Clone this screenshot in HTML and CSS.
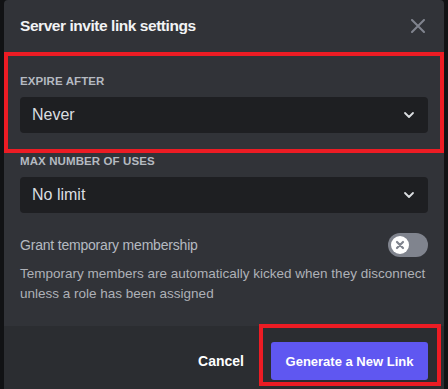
FILE: index.html
```html
<!DOCTYPE html>
<html lang="en">
<head>
    <meta charset="UTF-8">
    <meta name="viewport" content="width=device-width, initial-scale=1.0">
    <title>Server invite link settings</title>
    <link rel="stylesheet" href="styles.css">
</head>
<body>
    <div class="modal">
        <!-- header -->
        <div class="modal-header">
            <h1>Server invite link settings</h1>
            <button class="close-btn" aria-label="Close">
                <svg width="14" height="14" viewBox="0 0 14 14">
                    <path d="M1 1L13 13M13 1L1 13" stroke="currentColor" stroke-width="2" stroke-linecap="round"/>
                </svg>
            </button>
        </div>

        <!-- settings -->
        <div class="modal-body">
            <div class="field">
                <label>Expire After</label>
                <div class="select">
                    <span>Never</span>
                    <svg class="chevron" width="12" height="8" viewBox="0 0 12 8">
                        <path d="M2 2L6 6L10 2" fill="none" stroke="currentColor" stroke-width="1.8" stroke-linecap="round" stroke-linejoin="round"/>
                    </svg>
                </div>
            </div>

            <div class="field">
                <label>Max Number of Uses</label>
                <div class="select">
                    <span>No limit</span>
                    <svg class="chevron" width="12" height="8" viewBox="0 0 12 8">
                        <path d="M2 2L6 6L10 2" fill="none" stroke="currentColor" stroke-width="1.8" stroke-linecap="round" stroke-linejoin="round"/>
                    </svg>
                </div>
            </div>

            <div class="toggle-row">
                <span>Grant temporary membership</span>
                <div class="toggle">
                    <div class="knob">
                        <svg width="10" height="10" viewBox="0 0 10 10">
                            <path d="M2 2L8 8M8 2L2 8" stroke="currentColor" stroke-width="2.2" stroke-linecap="round"/>
                        </svg>
                    </div>
                </div>
            </div>
            <p class="hint">Temporary members are automatically kicked when they disconnect unless a role has been assigned</p>
        </div>

        <!-- footer -->
        <div class="modal-footer">
            <button class="btn-link">Cancel</button>
            <button class="btn-primary">Generate a New Link</button>
        </div>
    </div>

    <!-- annotation boxes -->
    <div class="mark mark-expire"></div>
    <div class="mark mark-generate"></div>
</body>
</html>
```

FILE: styles.css
```css
* {
    margin: 0;
    padding: 0;
    box-sizing: border-box;
    font-family: 'Liberation Sans', Arial, sans-serif;
}

body {
    background: #111214;
    padding: 0 4px;
    height: 389px;
    overflow: hidden;
    position: relative;
}

/* dialog */
.modal {
    background: #313338;
    border-radius: 4px 4px 0 0;
    width: 440px;
    min-height: 400px;
    display: flex;
    flex-direction: column;
}

.modal-header {
    display: flex;
    justify-content: space-between;
    align-items: center;
    padding: 16px 16px;
}

.modal-header h1 {
    font-size: 15.5px;
    line-height: 20px;
    font-weight: bold;
    color: #f2f3f5;
    letter-spacing: -0.45px;
}

.close-btn {
    background: none;
    border: none;
    color: #80848e;
    width: 14px;
    height: 14px;
    margin-right: 3px;
    display: flex;
}

.modal-body {
    padding: 21px 16px 22px;
    display: flex;
    flex-direction: column;
    gap: 20px;
}

.field label {
    display: block;
    font-size: 11.5px;
    line-height: 16px;
    font-weight: bold;
    text-transform: uppercase;
    color: #b5bac1;
    letter-spacing: 0.1px;
    margin-bottom: 8px;
}

.select {
    background: #1e1f22;
    border-radius: 4px;
    height: 36px;
    padding: 0 13px 0 12px;
    display: flex;
    justify-content: space-between;
    align-items: center;
    color: #dbdee1;
    font-size: 16px;
}

.chevron {
    color: #dbdee1;
}

.toggle-row {
    display: flex;
    justify-content: space-between;
    align-items: center;
    color: #b5bac1;
    font-size: 14px;
    letter-spacing: -0.2px;
}

.toggle {
    width: 40px;
    height: 24px;
    border-radius: 12px;
    background: #80848e;
    padding: 3px;
}

.knob {
    width: 18px;
    height: 18px;
    border-radius: 50%;
    background: #fff;
    color: #80848e;
    display: flex;
    align-items: center;
    justify-content: center;
}

.hint {
    margin-top: -13px;
    font-size: 13.5px;
    line-height: 20px;
    color: #aeb1b7;
}

.modal-footer {
    background: #2b2d31;
    padding: 16px;
    display: flex;
    justify-content: flex-end;
    align-items: center;
    gap: 8px;
}

.btn-link {
    background: none;
    border: none;
    color: #fff;
    font-size: 14px;
    font-weight: bold;
    padding: 0 19px 0 0;
    height: 38px;
}

.btn-primary {
    background: #5f57f1;
    border: none;
    border-radius: 3px;
    color: #fff;
    font-size: 13px;
    font-weight: bold;
    height: 38px;
    width: 157px;
}

/* red highlight boxes */
.mark {
    position: absolute;
    border: 4px solid #ec1c24;
}

.mark-expire {
    left: 4px;
    top: 52px;
    width: 440px;
    height: 101px;
}

.mark-generate {
    left: 259px;
    top: 324px;
    width: 182px;
    height: 62px;
}
```
